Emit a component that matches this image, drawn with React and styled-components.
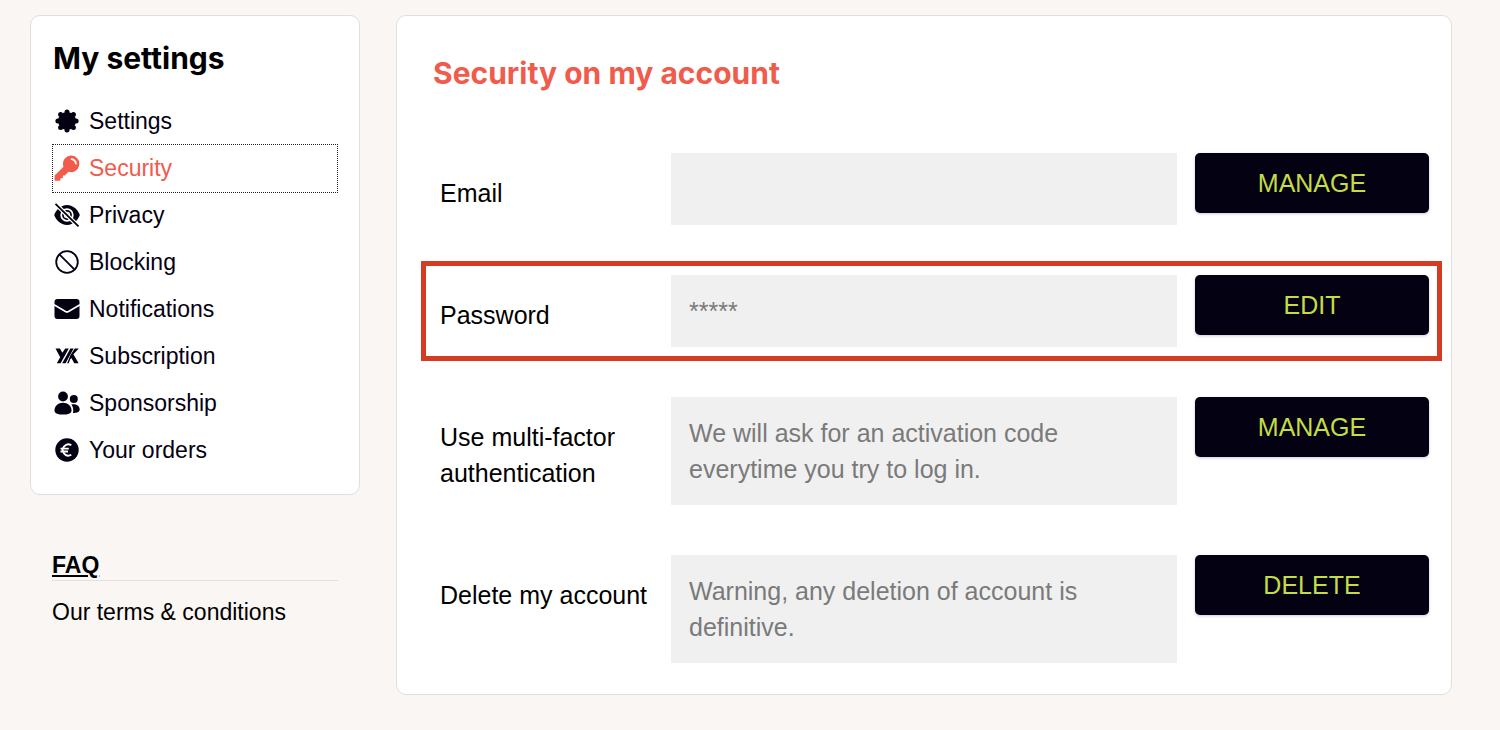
import styled, { createGlobalStyle } from "styled-components";

const GlobalStyle = createGlobalStyle`
  * {
    box-sizing: border-box;
  }

  body {
    margin: 0;
    background: #faf6f3;
    color: #000;
    font-family: "Liberation Sans", Arial, sans-serif;
  }
`;

const SettingsIcon = () => (
  <Icon>
    <circle cx="13" cy="13" r="9" />
    <circle cx="13" cy="3.9" r="2.5" />
    <circle cx="19.4" cy="6.6" r="2.5" />
    <circle cx="22.1" cy="13" r="2.5" />
    <circle cx="19.4" cy="19.4" r="2.5" />
    <circle cx="13" cy="22.1" r="2.5" />
    <circle cx="6.6" cy="19.4" r="2.5" />
    <circle cx="3.9" cy="13" r="2.5" />
    <circle cx="6.6" cy="6.6" r="2.5" />
  </Icon>
);

const KeyIcon = () => (
  <Icon>
    <path d="M17.3.5a8.3 8.3 0 0 0-7.8 11.2L.9 20.2a1 1 0 0 0-.3.7v4.3c0 .3.2.5.5.5h4.4c.5 0 .9-.4.9-.9v-1.6h1.6c.5 0 .9-.4.9-.9v-1.8h1.5c.3 0 .5-.1.7-.3l3.4-3.5A8.3 8.3 0 1 0 17.3.5z" />
    <path d="M17.6 4.1q3.8.6 4.4 4.6" fill="none" stroke="#fff" strokeWidth="1.7" strokeLinecap="round" />
  </Icon>
);

const PrivacyIcon = () => (
  <Icon>
    <path d="M13 3C6.5 3 1.8 8.2.2 13 1.8 17.8 6.5 23 13 23s11.2-5.2 12.8-10C24.2 8.2 19.5 3 13 3z" />
    <circle cx="13" cy="13" r="5.8" fill="none" stroke="#fff" strokeWidth="1.8" />
    <circle cx="13" cy="13" r="2.6" fill="none" stroke="#fff" strokeWidth="1.2" />
    <path d="M1.5 1.8 24.5 24.4" fill="none" stroke="#fff" strokeWidth="4.2" />
    <path d="M1.5 1.8 24.5 24.4" fill="none" stroke="currentColor" strokeWidth="1.8" />
  </Icon>
);

const BlockingIcon = () => (
  <Icon>
    <g fill="none" stroke="currentColor" strokeWidth="1.8">
      <circle cx="13" cy="13" r="10.8" />
      <path d="M5.4 5.4 20.6 20.6" />
    </g>
  </Icon>
);

const MailIcon = () => (
  <Icon>
    <rect x="0.5" y="3" width="25" height="20" rx="3" />
    <path d="M0 8.8 11.5 15.5q1.5.8 3 0L26 8.8" fill="none" stroke="#fff" strokeWidth="1.6" />
  </Icon>
);

const SubscriptionIcon = () => (
  <Icon>
    <path d="M1.5 5.5h4.4l2.5 4.2 2.8-4.2h3.6L6.6 20.3H2.8l3.4-6z" />
    <path d="M16.4 5.5h3.2L11.6 20.3H8.2z" />
    <path d="M20.8 5.5h4l-5.4 5.8 5.2 9h-4.3l-3-5.2-1.2 1.3-1.4 3.9h-1.6l3.4-8.2z" />
  </Icon>
);

const SponsorshipIcon = () => (
  <Icon>
    <circle cx="9" cy="6.5" r="4.9" />
    <circle cx="19.8" cy="9" r="4" />
    <path d="M9 12.7c-4.900 0-8.500 3.300-8.500 7.700 0 3 3.500 4.100 8.500 4.100s8.500-1.100 8.500-4.100c0-4.400-3.600-7.700-8.500-7.700z" />
    <path d="M17.3 14.6c4.600-1.500 8.400 1.300 8.400 4.800 0 2.500-2.500 3.500-6.700 3.500.7-3.300.1-6.200-1.700-8.300z" />
  </Icon>
);

const EuroIcon = () => (
  <Icon>
    <circle cx="13" cy="13" r="11.7" />
    <path d="M17.3 8.2a5.6 5.6 0 1 0 0 9.6M6.500 11.600h8.300M6.500 14.500h7.500" fill="none" stroke="#fff" strokeWidth="1.8" />
  </Icon>
);

const menu = [
  { label: "Settings", icon: SettingsIcon },
  { label: "Security", icon: KeyIcon, active: true },
  { label: "Privacy", icon: PrivacyIcon },
  { label: "Blocking", icon: BlockingIcon },
  { label: "Notifications", icon: MailIcon },
  { label: "Subscription", icon: SubscriptionIcon },
  { label: "Sponsorship", icon: SponsorshipIcon },
  { label: "Your orders", icon: EuroIcon },
];

const rows = [
  { label: "Email", value: "", action: "MANAGE" },
  { label: "Password", value: "*****", action: "EDIT", highlighted: true },
  {
    label: "Use multi-factor authentication",
    value: "We will ask for an activation code everytime you try to log in.",
    action: "MANAGE",
  },
  {
    label: "Delete my account",
    value: "Warning, any deletion of account is definitive.",
    action: "DELETE",
  },
];

export default function App() {
  return (
    <>
      <GlobalStyle />
      <Page>
        <Sidebar>
          <MenuCard>
            <MenuTitle>My settings</MenuTitle>
            <nav>
              {menu.map(({ label, icon: ItemIcon, active }) => (
                <MenuLink key={label} href="#" $active={active} aria-current={active ? "page" : undefined}>
                  <ItemIcon />
                  {label}
                </MenuLink>
              ))}
            </nav>
          </MenuCard>
          <HelpLinks>
            <FaqRow>
              <FaqLink href="#">FAQ</FaqLink>
            </FaqRow>
            <TermsLink href="#">Our terms &amp; conditions</TermsLink>
          </HelpLinks>
        </Sidebar>
        <SecurityCard>
          <SecurityTitle>Security on my account</SecurityTitle>
          <Rows>
            {rows.map((row) => (
              <Row key={row.label} $highlighted={row.highlighted}>
                <Label>{row.label}</Label>
                <Value>{row.value}</Value>
                <Button type="button" aria-label={`${row.action} ${row.label}`}>
                  {row.action}
                </Button>
              </Row>
            ))}
          </Rows>
        </SecurityCard>
      </Page>
    </>
  );
}

const Page = styled.div`
  display: flex;
  align-items: flex-start;
  gap: 36px;
  padding: 15px 48px 35px 30px;
`;

const Sidebar = styled.aside`
  flex: 0 0 330px;
`;

const Card = styled.section`
  background: #fff;
  border: 1px solid #dfdfdf;
  border-radius: 10px;
`;

const MenuCard = styled(Card)`
  padding: 20px 22px;
`;

const Title = styled.h1`
  margin: 0;
  font: 700 30px/44px Inter, sans-serif;
`;

const MenuTitle = styled(Title)`
  margin-bottom: 18px;
`;

const MenuLink = styled.a`
  display: flex;
  align-items: center;
  gap: 9px;
  height: 47px;
  padding: 0 0 1px 1px;
  color: ${(props) => (props.$active ? "#f05b4c" : "#030112")};
  outline: ${(props) => (props.$active ? "1px dotted #222" : "none")};
  font-size: 23px;
  text-decoration: none;
`;

const Icon = styled.svg.attrs({ viewBox: "0 0 26 26", "aria-hidden": true })`
  flex: none;
  width: 26px;
  height: 26px;
  fill: currentColor;
`;

const HelpLinks = styled.div`
  padding: 56px 22px 0;
  font-size: 23px;
  line-height: 29px;
`;

const FaqRow = styled.div`
  margin-bottom: 17px;
  border-bottom: 1px solid #e3e1df;
`;

const FaqLink = styled.a`
  color: #000;
  font-weight: 700;
`;

const TermsLink = styled.a`
  color: #000;
  text-decoration: none;
`;

const SecurityCard = styled(Card)`
  flex: 1;
  min-width: 0;
  padding: 35px 22px 31px 36px;
`;

const SecurityTitle = styled(Title)`
  color: #f05b4c;
`;

const Rows = styled.div`
  display: flex;
  flex-direction: column;
  gap: 50px;
  margin-top: 58px;
  padding-left: 7px;
`;

const Row = styled.div`
  position: relative;
  display: grid;
  grid-template-columns: 213px minmax(0, 1fr) 234px;
  column-gap: 18px;
  align-items: start;
  font-size: 25px;
  line-height: 36px;

  &::after {
    content: "";
    display: ${(props) => (props.$highlighted ? "block" : "none")};
    position: absolute;
    inset: -14px -13px -14px -19px;
    border: 5px solid #d43b22;
    pointer-events: none;
  }
`;

const Label = styled.div`
  padding-top: 22px;
`;

const Value = styled.div`
  min-height: 72px;
  padding: 18px;
  background: #f0f0f0;
  color: #7a7a7a;
`;

const Button = styled.button`
  padding: 12px;
  border: 0;
  border-radius: 5px;
  background: #030112;
  box-shadow: 0 1px 3px rgba(3, 1, 18, 0.2);
  color: #c3dd44;
  font: inherit;
  cursor: pointer;
`;
